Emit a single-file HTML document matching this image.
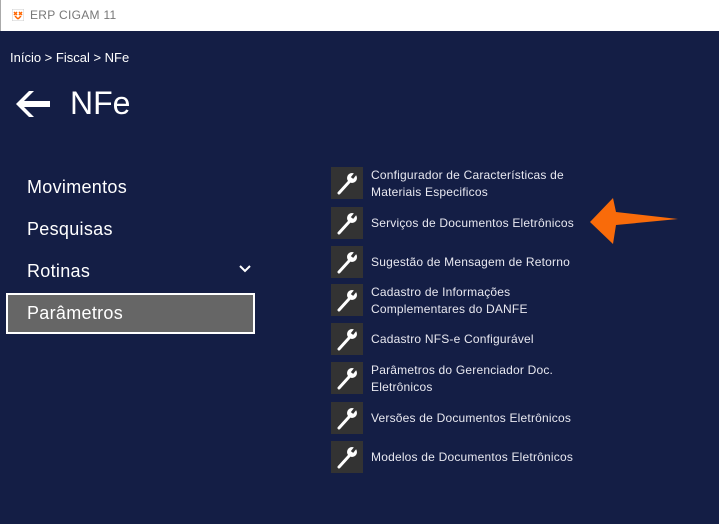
<html><head><style>
body{margin:0;width:719px;height:524px;overflow:hidden;background:#141e45;font-family:"Liberation Sans",sans-serif;position:relative}
.tb{position:absolute;left:0;top:0;width:719px;height:31px;background:#fff;border-left:1px solid #aaa;box-sizing:border-box}
.tb span{position:absolute;left:29px;top:8px;font-size:12px;color:#777;letter-spacing:0.3px}
.t{position:absolute;color:#fff}
.it{position:absolute;left:331px;width:32px;height:32px;background:#333}
.lb{position:absolute;left:371px;color:#e8e8f0;font-size:12px;line-height:17px;letter-spacing:0.2px}
</style></head><body>
<div class="tb"><svg style="position:absolute;left:11px;top:9px" width="12" height="12"><rect width="12" height="12" fill="#fff" stroke="#ccc"/><path d="M2 3l3 3M5 3l-3 3M7 3l3 3M10 3l-3 3M3 7l3 3M9 7l-3 3" stroke="#f60" stroke-width="1.5"/></svg><span>ERP CIGAM 11</span></div>
<div class="t" style="left:10px;top:50px;font-size:13px">Início &gt; Fiscal &gt; NFe</div>
<svg style="position:absolute;left:14px;top:89px" width="38" height="30"><path d="M2 15L15 2h5L10 12h26v6H10l10 10h-5z" fill="#fff"/></svg>
<div class="t" style="left:70px;top:85px;font-size:32px">NFe</div>
<div class="t" style="left:27px;top:177px;font-size:18px;letter-spacing:0.3px">Movimentos</div>
<div class="t" style="left:27px;top:219px;font-size:18px;letter-spacing:0.3px">Pesquisas</div>
<div class="t" style="left:27px;top:261px;font-size:18px;letter-spacing:0.3px">Rotinas</div>
<svg style="position:absolute;left:239px;top:265px" width="12" height="8"><path d="M1 1l5 5 5-5" stroke="#fff" stroke-width="2" fill="none"/></svg>
<div style="position:absolute;left:6px;top:293px;width:249px;height:41px;border:2px solid #fff;background:#666;box-sizing:border-box"></div>
<div class="t" style="left:27px;top:303px;font-size:18px;letter-spacing:0.3px">Parâmetros</div>
<svg width="0" height="0"><defs><symbol id="w" viewBox="0 0 32 32"><path d="M8 26L18 15" stroke="#fff" stroke-width="3" stroke-linecap="round"/><circle cx="21" cy="11" r="5" fill="#fff"/><path d="M21 11l4-5" stroke="#333" stroke-width="3"/></symbol></defs></svg>
<div class="it" style="top:167px"><svg width="32" height="32"><use href="#w"/></svg></div>
<div class="lb" style="top:167px">Configurador de Características de<br>Materiais Especificos</div>
<div class="it" style="top:207px"><svg width="32" height="32"><use href="#w"/></svg></div>
<div class="lb" style="top:215px">Serviços de Documentos Eletrônicos</div>
<div class="it" style="top:246px"><svg width="32" height="32"><use href="#w"/></svg></div>
<div class="lb" style="top:254px">Sugestão de Mensagem de Retorno</div>
<div class="it" style="top:284px"><svg width="32" height="32"><use href="#w"/></svg></div>
<div class="lb" style="top:284px">Cadastro de Informações<br>Complementares do DANFE</div>
<div class="it" style="top:323px"><svg width="32" height="32"><use href="#w"/></svg></div>
<div class="lb" style="top:331px">Cadastro NFS-e Configurável</div>
<div class="it" style="top:362px"><svg width="32" height="32"><use href="#w"/></svg></div>
<div class="lb" style="top:362px">Parâmetros do Gerenciador Doc.<br>Eletrônicos</div>
<div class="it" style="top:402px"><svg width="32" height="32"><use href="#w"/></svg></div>
<div class="lb" style="top:410px">Versões de Documentos Eletrônicos</div>
<div class="it" style="top:441px"><svg width="32" height="32"><use href="#w"/></svg></div>
<div class="lb" style="top:449px">Modelos de Documentos Eletrônicos</div>
<svg style="position:absolute;left:585px;top:195px" width="100" height="52"><path d="M5 27L28 3L31 17L93 24L31 30L28 49Z" fill="#f96b0a"/></svg>
</body></html>
